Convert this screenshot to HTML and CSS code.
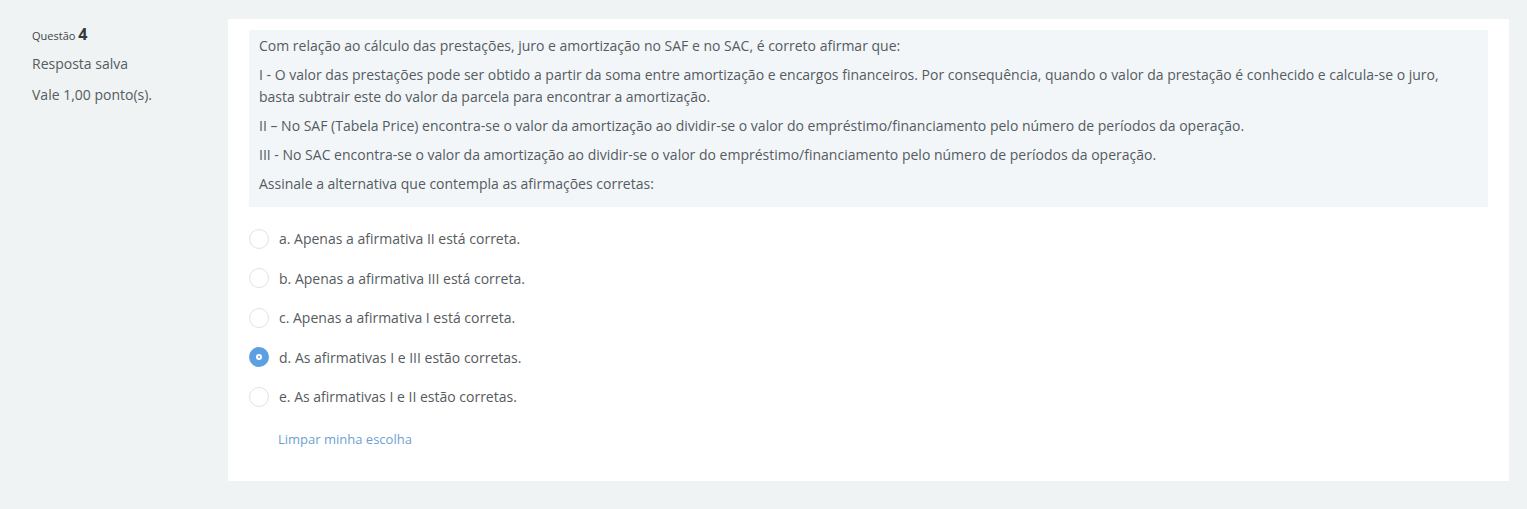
FILE: index.html
```html
<!DOCTYPE html>
<html lang="pt">
<head>
<meta charset="utf-8">
<link rel="stylesheet" href="styles.css">
</head>
<body>
<div class="que">
  <div class="info">
    <h3 class="no">Questão <span class="qno">4</span></h3>
    <div class="state">Resposta salva</div>
    <div class="grade">Vale 1,00 ponto(s).</div>
  </div>
  <div class="content">
    <div class="formulation">
      <p>Com relação ao cálculo das prestações, juro e amortização no SAF e no SAC, é correto afirmar que:</p>
      <p>I - O valor das prestações pode ser obtido a partir da soma entre amortização e encargos financeiros. Por consequência, quando o valor da prestação é conhecido e calcula-se o juro, basta subtrair este do valor da parcela para encontrar a amortização.</p>
      <p>II – No SAF (Tabela Price) encontra-se o valor da amortização ao dividir-se o valor do empréstimo/financiamento pelo número de períodos da operação.</p>
      <p>III - No SAC encontra-se o valor da amortização ao dividir-se o valor do empréstimo/financiamento pelo número de períodos da operação.</p>
      <p>Assinale a alternativa que contempla as afirmações corretas:</p>
    </div>
    <div class="answers">
      <label class="opt"><span class="radio"></span><span>a. Apenas a afirmativa II está correta.</span></label>
      <label class="opt"><span class="radio"></span><span>b. Apenas a afirmativa III está correta.</span></label>
      <label class="opt"><span class="radio"></span><span>c. Apenas a afirmativa I está correta.</span></label>
      <label class="opt"><span class="radio checked"></span><span>d. As afirmativas I e III estão corretas.</span></label>
      <label class="opt"><span class="radio"></span><span>e. As afirmativas I e II estão corretas.</span></label>
    </div>
    <a class="clear" href="#">Limpar minha escolha</a>
  </div>
</div>
</body>
</html>
```
FILE: styles.css
```css
* { box-sizing: border-box; }
html, body { margin: 0; padding: 0; }
body {
  background: #eff3f4;
  font-family: "Open Sans", "Liberation Sans", sans-serif;
  font-size: 14px;
  color: #555b60;
  height: 509px;
  overflow: hidden;
}
.que {
  display: flex;
  padding: 19px 18px 0 32px;
}
.info {
  width: 196px;
  flex: none;
  padding-top: 6px;
}
.no {
  margin: 0;
  font-weight: normal;
  font-size: 11px;
  color: #444;
  line-height: 18px;
}
.qno {
  font-size: 16px;
  font-weight: 700;
  color: #34393d;
}
.state {
  margin-top: 10px;
  line-height: 18px;
}
.grade {
  margin-top: 13px;
  line-height: 18px;
}
.content {
  flex: 1;
  background: #fff;
  padding: 11px 21px 26px 21px;
  height: 462px;
}
.formulation {
  background: #f2f6f9;
  padding: 5px 10px 5px 10px;
}
.formulation p {
  margin: 0 0 7px 0;
  line-height: 22px;
}
.answers {
  display: flex;
  flex-direction: column;
  padding-top: 12px;
}
.opt {
  display: flex;
  align-items: center;
  height: 39.5px;
  gap: 10px;
}
.radio {
  width: 20px;
  height: 20px;
  border-radius: 50%;
  border: 1px solid #dfe2e4;
  background: #fff;
  flex: none;
}
.radio.checked {
  border: 7px solid #5c9fe2;
  background: #fff;
  position: relative;
}
.radio.checked::after {
  content: "";
  position: absolute;
  left: 2px;
  top: 2px;
  width: 2px;
  height: 2px;
  border-radius: 50%;
  background: #5c9fe2;
}
.clear {
  display: inline-block;
  margin: 13px 0 0 29px;
  color: #6e9fd4;
  text-decoration: none;
  font-size: 13px;
}
```
